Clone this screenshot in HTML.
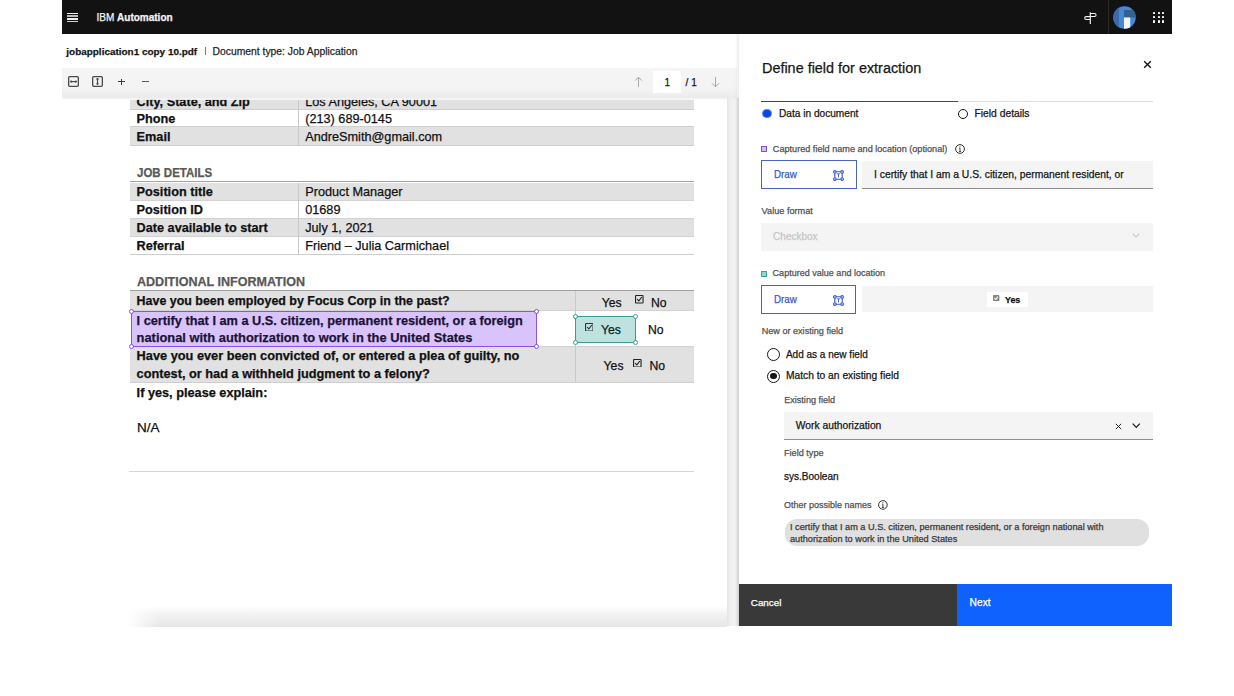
<!DOCTYPE html>
<html><head><meta charset="utf-8"><title>Define field</title>
<style>
html,body{margin:0;padding:0;}
body{width:1234px;height:696px;overflow:hidden;background:#fff;position:relative;font-family:"Liberation Sans",sans-serif;}
.t{position:absolute;white-space:nowrap;line-height:1;-webkit-text-stroke:0.25px currentColor;}
.r{position:absolute;}
</style></head><body>
<div class="r" style="left:62.00px;top:0.00px;width:1110.00px;height:34.00px;background:#121212;"></div>
<div class="r" style="left:66.70px;top:12.60px;width:11.80px;height:1.50px;background:#f0f0f0;"></div>
<div class="r" style="left:66.70px;top:15.20px;width:11.80px;height:1.50px;background:#bdbdbd;"></div>
<div class="r" style="left:66.70px;top:18.00px;width:11.80px;height:1.50px;background:#eeeeee;"></div>
<div class="r" style="left:66.70px;top:20.50px;width:11.80px;height:1.50px;background:#cfcfcf;"></div>
<div class="t" style="left:96.50px;top:13.00px;font-size:10.00px;font-weight:400;color:#f4f4f4;">IBM <b style="font-weight:700">Automation</b></div>
<svg class="r" style="left:1082px;top:10px" width="16" height="16" viewBox="0 0 16 16">
<path d="M8.3 2.3V13.9" stroke="#f4f4f4" stroke-width="1.15" fill="none"/>
<path d="M8.3 3.5H12.6a1.45 1.45 0 0 1 0 2.9H8.3" stroke="#f4f4f4" stroke-width="1.05" fill="none"/>
<path d="M8.3 6.6H4.1a1.4 1.4 0 0 0 0 2.8H8.3" stroke="#f4f4f4" stroke-width="1.05" fill="none"/>
</svg>
<div class="r" style="left:1108.00px;top:0.00px;width:1.00px;height:34.00px;background:#2e2a28;"></div>
<svg class="r" style="left:1112px;top:4.5px" width="25" height="25" viewBox="0 0 25 25">
<defs><clipPath id="av"><circle cx="12.5" cy="12.5" r="11.2"/></clipPath></defs>
<circle cx="12.5" cy="12.5" r="11.8" fill="#0c1830"/>
<circle cx="12.5" cy="12.5" r="11.2" fill="#4a86d6"/>
<g clip-path="url(#av)">
<rect x="0" y="0" width="7" height="25" fill="#3b6aa8"/>
<rect x="12" y="5" width="13" height="7.5" fill="#2f6390"/>
<rect x="12" y="12.5" width="6.2" height="13" fill="#f2f4f6"/>
</g></svg>
<div class="r" style="left:1153.10px;top:11.50px;width:2.20px;height:2.20px;background:#f4f4f4;border-radius:0.6px"></div>
<div class="r" style="left:1153.10px;top:16.00px;width:2.20px;height:2.20px;background:#f4f4f4;border-radius:0.6px"></div>
<div class="r" style="left:1153.10px;top:20.40px;width:2.20px;height:2.20px;background:#f4f4f4;border-radius:0.6px"></div>
<div class="r" style="left:1157.70px;top:11.50px;width:2.20px;height:2.20px;background:#f4f4f4;border-radius:0.6px"></div>
<div class="r" style="left:1157.70px;top:16.00px;width:2.20px;height:2.20px;background:#f4f4f4;border-radius:0.6px"></div>
<div class="r" style="left:1157.70px;top:20.40px;width:2.20px;height:2.20px;background:#f4f4f4;border-radius:0.6px"></div>
<div class="r" style="left:1162.00px;top:11.50px;width:2.20px;height:2.20px;background:#f4f4f4;border-radius:0.6px"></div>
<div class="r" style="left:1162.00px;top:16.00px;width:2.20px;height:2.20px;background:#f4f4f4;border-radius:0.6px"></div>
<div class="r" style="left:1162.00px;top:20.40px;width:2.20px;height:2.20px;background:#f4f4f4;border-radius:0.6px"></div>
<div class="t" style="left:66.30px;top:47.00px;font-size:9.95px;font-weight:700;color:#161616;">jobapplication1 copy 10.pdf</div>
<div class="r" style="left:204.60px;top:47.40px;width:1.10px;height:7.60px;background:#7a7a7a;"></div>
<div class="t" style="left:212.50px;top:47.00px;font-size:10.35px;font-weight:400;color:#262626;">Document type: Job Application</div>
<div class="r" style="left:727.00px;top:98.00px;width:12.00px;height:528.00px;background:linear-gradient(90deg,#e4e4e4,#efefef 25%,#f2f2f2 70%,#e0e0e0);"></div>
<div class="r" style="left:128.00px;top:606.00px;width:599.00px;height:20.50px;background:linear-gradient(90deg,#fff 0,rgba(255,255,255,0) 32px),linear-gradient(#ffffff,#f2f2f2 40%,#e6e6e6);"></div>
<div class="r" style="left:129.70px;top:98.00px;width:564.10px;height:11.60px;background:#e1e1e1;"></div>
<div class="r" style="left:129.70px;top:109.20px;width:564.10px;height:1.00px;background:#cfcfcf;"></div>
<div class="r" style="left:129.70px;top:126.40px;width:564.10px;height:1.00px;background:#d0d0d0;"></div>
<div class="r" style="left:129.70px;top:127.40px;width:564.10px;height:17.60px;background:#e1e1e1;"></div>
<div class="r" style="left:129.70px;top:145.00px;width:564.10px;height:1.00px;background:#cfcfcf;"></div>
<div class="r" style="left:297.80px;top:98.00px;width:1.00px;height:47.50px;background:#c9c9c9;"></div>
<div class="t" style="left:136.60px;top:96.00px;font-size:12.70px;font-weight:700;color:#111;">City, State, and Zip</div>
<div class="t" style="left:305.20px;top:96.00px;font-size:12.70px;font-weight:400;color:#111;">Los Angeles, CA 90001</div>
<div class="t" style="left:136.60px;top:113.00px;font-size:12.70px;font-weight:700;color:#111;">Phone</div>
<div class="t" style="left:305.20px;top:113.00px;font-size:12.70px;font-weight:400;color:#111;">(213) 689-0145</div>
<div class="t" style="left:136.60px;top:131.00px;font-size:12.70px;font-weight:700;color:#111;">Email</div>
<div class="t" style="left:305.20px;top:131.00px;font-size:12.70px;font-weight:400;color:#111;">AndreSmith@gmail.com</div>
<div class="t" style="left:136.60px;top:167.00px;font-size:12.60px;font-weight:700;color:#585858;transform:scaleX(0.913);transform-origin:0 0">JOB DETAILS</div>
<div class="r" style="left:129.70px;top:180.70px;width:564.10px;height:1.60px;background:#a2a2a2;"></div>
<div class="r" style="left:129.70px;top:182.60px;width:564.10px;height:17.80px;background:#e1e1e1;"></div>
<div class="r" style="left:129.70px;top:200.00px;width:564.10px;height:1.00px;background:#d2d2d2;"></div>
<div class="r" style="left:129.70px;top:217.60px;width:564.10px;height:1.00px;background:#d2d2d2;"></div>
<div class="r" style="left:129.70px;top:218.60px;width:564.10px;height:17.80px;background:#e1e1e1;"></div>
<div class="r" style="left:129.70px;top:236.20px;width:564.10px;height:1.00px;background:#d2d2d2;"></div>
<div class="r" style="left:129.70px;top:254.00px;width:564.10px;height:1.00px;background:#cdcdcd;"></div>
<div class="r" style="left:297.80px;top:182.60px;width:1.00px;height:71.90px;background:#c9c9c9;"></div>
<div class="t" style="left:136.60px;top:186.00px;font-size:12.70px;font-weight:700;color:#111;">Position title</div>
<div class="t" style="left:305.20px;top:186.00px;font-size:12.70px;font-weight:400;color:#111;">Product Manager</div>
<div class="t" style="left:136.60px;top:204.00px;font-size:12.70px;font-weight:700;color:#111;">Position ID</div>
<div class="t" style="left:305.20px;top:204.00px;font-size:12.70px;font-weight:400;color:#111;">01689</div>
<div class="t" style="left:136.60px;top:222.00px;font-size:12.70px;font-weight:700;color:#111;">Date available to start</div>
<div class="t" style="left:305.20px;top:222.00px;font-size:12.70px;font-weight:400;color:#111;">July 1, 2021</div>
<div class="t" style="left:136.60px;top:240.00px;font-size:12.70px;font-weight:700;color:#111;">Referral</div>
<div class="t" style="left:305.20px;top:240.00px;font-size:12.70px;font-weight:400;color:#111;">Friend – Julia Carmichael</div>
<div class="t" style="left:136.60px;top:276.00px;font-size:12.80px;font-weight:700;color:#585858;transform:scaleX(0.979);transform-origin:0 0">ADDITIONAL INFORMATION</div>
<div class="r" style="left:129.70px;top:289.50px;width:564.10px;height:1.60px;background:#a2a2a2;"></div>
<div class="r" style="left:129.70px;top:291.30px;width:564.10px;height:19.30px;background:#e1e1e1;"></div>
<div class="r" style="left:129.70px;top:310.40px;width:564.10px;height:1.00px;background:#d2d2d2;"></div>
<div class="r" style="left:129.70px;top:346.30px;width:564.10px;height:35.90px;background:#e1e1e1;"></div>
<div class="r" style="left:129.70px;top:345.80px;width:564.10px;height:1.00px;background:#d2d2d2;"></div>
<div class="r" style="left:129.70px;top:382.00px;width:564.10px;height:1.00px;background:#cfcfcf;"></div>
<div class="r" style="left:575.20px;top:291.30px;width:1.00px;height:91.20px;background:#c9c9c9;"></div>
<div class="t" style="left:136.60px;top:295.00px;font-size:12.45px;font-weight:700;color:#111;">Have you been employed by Focus Corp in the past?</div>
<div class="t" style="left:136.60px;top:350.00px;font-size:12.77px;font-weight:700;color:#111;">Have you ever been convicted of, or entered a plea of guilty, no</div>
<div class="t" style="left:136.60px;top:368.00px;font-size:12.76px;font-weight:700;color:#111;">contest, or had a withheld judgment to a felony?</div>
<div class="t" style="left:136.60px;top:387.00px;font-size:12.72px;font-weight:700;color:#111;">If yes, please explain:</div>
<div class="t" style="left:137.00px;top:421.00px;font-size:13.50px;font-weight:400;color:#111;">N/A</div>
<div class="r" style="left:129.00px;top:470.50px;width:565.00px;height:1.00px;background:#d4d4d4;"></div>
<div class="t" style="left:601.80px;top:297.00px;font-size:12.20px;font-weight:400;color:#111;">Yes</div>
<svg class="r" style="left:635.00px;top:295.00px" width="8.6" height="8.6" viewBox="0 0 10 10">
<rect x="0.65" y="0.65" width="8.7" height="8.7" rx="0.6" fill="none" stroke="#222" stroke-width="1.3"/>
<path d="M2.5 4.9L4.5 6.9L7.9 2.3" fill="none" stroke="#222" stroke-width="1.3"/></svg>
<div class="t" style="left:651.00px;top:297.00px;font-size:12.20px;font-weight:700;color:#111;font-weight:400">No</div>
<div class="t" style="left:603.60px;top:360.00px;font-size:12.20px;font-weight:400;color:#111;">Yes</div>
<svg class="r" style="left:633.00px;top:358.50px" width="8.6" height="8.6" viewBox="0 0 10 10">
<rect x="0.65" y="0.65" width="8.7" height="8.7" rx="0.6" fill="none" stroke="#222" stroke-width="1.3"/>
<path d="M2.5 4.9L4.5 6.9L7.9 2.3" fill="none" stroke="#222" stroke-width="1.3"/></svg>
<div class="t" style="left:649.50px;top:360.00px;font-size:12.20px;font-weight:400;color:#111;">No</div>
<div class="t" style="left:648.00px;top:324.00px;font-size:12.20px;font-weight:400;color:#111;">No</div>
<div class="r" style="left:130.60px;top:310.90px;width:406.40px;height:36.00px;background:#d8c4fb;border:1.4px solid #8a52e6;box-sizing:border-box"></div>
<div class="t" style="left:136.60px;top:315.00px;font-size:12.75px;font-weight:700;color:#1c1238;">I certify that I am a U.S. citizen, permanent resident, or a foreign</div>
<div class="t" style="left:136.60px;top:332.00px;font-size:12.87px;font-weight:700;color:#1c1238;">national with authorization to work in the United States</div>
<div class="r" style="left:128.50px;top:308.80px;width:5.6px;height:5.6px;border-radius:50%;background:#fff;border:1.3px solid #8550e0;box-sizing:border-box"></div>
<div class="r" style="left:533.50px;top:308.80px;width:5.6px;height:5.6px;border-radius:50%;background:#fff;border:1.3px solid #8550e0;box-sizing:border-box"></div>
<div class="r" style="left:128.50px;top:343.50px;width:5.6px;height:5.6px;border-radius:50%;background:#fff;border:1.3px solid #8550e0;box-sizing:border-box"></div>
<div class="r" style="left:533.50px;top:343.50px;width:5.6px;height:5.6px;border-radius:50%;background:#fff;border:1.3px solid #8550e0;box-sizing:border-box"></div>
<div class="r" style="left:574.80px;top:315.90px;width:61.60px;height:27.10px;background:#bde2e0;border:1.5px solid #33a08f;box-sizing:border-box"></div>
<svg class="r" style="left:584.80px;top:322.70px" width="8.6" height="8.6" viewBox="0 0 10 10">
<rect x="0.65" y="0.65" width="8.7" height="8.7" rx="0.6" fill="none" stroke="#2a3a3a" stroke-width="1.3"/>
<path d="M2.5 4.9L4.5 6.9L7.9 2.3" fill="none" stroke="#2a3a3a" stroke-width="1.3"/></svg>
<div class="t" style="left:601.00px;top:324.00px;font-size:12.20px;font-weight:400;color:#0f1f1f;">Yes</div>
<div class="r" style="left:572.70px;top:313.80px;width:5.6px;height:5.6px;border-radius:50%;background:#fff;border:1.3px solid #33a08f;box-sizing:border-box"></div>
<div class="r" style="left:632.90px;top:313.80px;width:5.6px;height:5.6px;border-radius:50%;background:#fff;border:1.3px solid #33a08f;box-sizing:border-box"></div>
<div class="r" style="left:572.70px;top:339.50px;width:5.6px;height:5.6px;border-radius:50%;background:#fff;border:1.3px solid #33a08f;box-sizing:border-box"></div>
<div class="r" style="left:632.90px;top:339.50px;width:5.6px;height:5.6px;border-radius:50%;background:#fff;border:1.3px solid #33a08f;box-sizing:border-box"></div>
<div class="r" style="left:62.00px;top:68.00px;width:675.00px;height:30.00px;background:linear-gradient(#f5f5f5 0,#f3f3f3 70%,#ebebeb 100%);"></div>
<div class="r" style="left:62.00px;top:98.00px;width:665.00px;height:1.60px;background:linear-gradient(#f3f3f3,rgba(250,250,250,0.85));"></div>
<svg class="r" style="left:67.6px;top:76px" width="11" height="11" viewBox="0 0 11 11">
<rect x="0.65" y="0.65" width="9.7" height="9.7" rx="1" fill="none" stroke="#4a4a4a" stroke-width="1.3"/>
<path d="M2.6 5.6H8.4" stroke="#4a4a4a" stroke-width="1.2" fill="none"/><circle cx="3.2" cy="5.6" r="1.15" fill="#4a4a4a"/><circle cx="7.8" cy="5.6" r="1.15" fill="#4a4a4a"/></svg>
<svg class="r" style="left:91.7px;top:76px" width="11" height="11" viewBox="0 0 11 11">
<rect x="0.65" y="0.65" width="9.7" height="9.7" rx="1" fill="none" stroke="#4a4a4a" stroke-width="1.3"/>
<path d="M5.5 2.6V8.4" stroke="#4a4a4a" stroke-width="1.2" fill="none"/><circle cx="5.5" cy="3.2" r="1.1" fill="#4a4a4a"/><circle cx="5.5" cy="7.8" r="1.1" fill="#4a4a4a"/></svg>
<div class="r" style="left:118.40px;top:81.00px;width:6.20px;height:1.30px;background:#3a3a3a;"></div>
<div class="r" style="left:120.85px;top:78.50px;width:1.30px;height:6.30px;background:#3a3a3a;"></div>
<div class="r" style="left:142.30px;top:81.00px;width:6.90px;height:1.20px;background:#5a5a5a;"></div>
<svg class="r" style="left:634px;top:76px" width="9" height="12" viewBox="0 0 9 12">
<path d="M4.5 1.2V11M4.5 1.2L1 4.7M4.5 1.2L8 4.7" stroke="#a8a8a8" stroke-width="1" fill="none"/></svg>
<div class="r" style="left:653.00px;top:70.80px;width:28.00px;height:21.90px;background:#ffffff;"></div>
<div class="t" style="left:664.60px;top:78.00px;font-size:10.00px;font-weight:400;color:#161616;">1</div>
<div class="t" style="left:685.60px;top:78.00px;font-size:10.00px;font-weight:400;color:#161616;">/ 1</div>
<svg class="r" style="left:711.3px;top:76px" width="9" height="12" viewBox="0 0 9 12">
<path d="M4.5 1V10.8M4.5 10.8L1 7.3M4.5 10.8L8 7.3" stroke="#a8a8a8" stroke-width="1" fill="none"/></svg>
<div class="r" style="left:735.00px;top:34.00px;width:4.00px;height:592.00px;background:linear-gradient(90deg,rgba(0,0,0,0),rgba(0,0,0,0.075));"></div>
<div class="r" style="left:739.00px;top:34.00px;width:433.00px;height:592.00px;background:#ffffff;"></div>
<div class="t" style="left:762.00px;top:61.00px;font-size:14.42px;font-weight:400;color:#161616;">Define field for extraction</div>
<svg class="r" style="left:1143px;top:60px" width="9" height="9" viewBox="0 0 9 9">
<path d="M1.2 1.2L7.8 7.8M7.8 1.2L1.2 7.8" stroke="#161616" stroke-width="1.4" fill="none"/></svg>
<div class="r" style="left:761.20px;top:101.00px;width:392.20px;height:1.00px;background:#dcdcdc;"></div>
<div class="r" style="left:761.20px;top:100.60px;width:196.50px;height:1.90px;background:#2c3fb4;"></div>
<div class="r" style="left:762.1px;top:108.6px;width:9.8px;height:9.8px;border-radius:50%;background:#0a44e4;border:1.4px solid #5685f2;box-sizing:border-box"></div>
<div class="t" style="left:779.00px;top:109.00px;font-size:10.14px;font-weight:400;color:#161616;">Data in document</div>
<div class="r" style="left:957.6px;top:108.8px;width:10.2px;height:10.2px;border-radius:50%;border:1.1px solid #161616;box-sizing:border-box"></div>
<div class="t" style="left:974.50px;top:109.00px;font-size:10.30px;font-weight:400;color:#161616;">Field details</div>
<div class="r" style="left:761.40px;top:146.00px;width:6.00px;height:6.00px;background:#d6c0f8;border:1.3px solid #7f52d2;box-sizing:border-box"></div>
<div class="t" style="left:772.80px;top:145.00px;font-size:9.15px;font-weight:400;color:#525252;">Captured field name and location (optional)</div>
<svg class="r" style="left:954.60px;top:144.30px" width="10" height="10" viewBox="0 0 10 10">
<circle cx="5" cy="5" r="4.4" fill="none" stroke="#161616" stroke-width="0.9"/>
<path d="M5 4.2V7.6M4 7.6H6M4.2 4.2H5" stroke="#161616" stroke-width="0.8" fill="none"/><circle cx="5" cy="2.8" r="0.55" fill="#161616"/></svg>
<div class="r" style="left:761.20px;top:160.20px;width:95.40px;height:28.80px;background:#ffffff;border:1.2px solid #4863c4;box-sizing:border-box"></div>
<div class="t" style="left:773.70px;top:170.00px;font-size:10.30px;font-weight:400;color:#3b5ccc;transform:scaleX(0.95);transform-origin:0 0">Draw</div>
<svg class="r" style="left:833.40px;top:169.70px" width="11" height="11" viewBox="0 0 11 11">
<path d="M3.2 1.8H7.8M3.2 9.2H7.8M1.8 3.2V7.8M9.2 3.2V7.8" stroke="#3553c8" stroke-width="1.1" fill="none"/>
<circle cx="1.9" cy="1.9" r="1.3" fill="#fff" stroke="#3553c8" stroke-width="1.1"/><circle cx="9.1" cy="1.9" r="1.3" fill="#fff" stroke="#3553c8" stroke-width="1.1"/>
<circle cx="1.9" cy="9.1" r="1.3" fill="#fff" stroke="#3553c8" stroke-width="1.1"/><circle cx="9.1" cy="9.1" r="1.3" fill="#fff" stroke="#3553c8" stroke-width="1.1"/>
<path d="M4.1 3.9H6.9M5.5 3.9V7.4" stroke="#3553c8" stroke-width="0.9" fill="none"/></svg>
<div class="r" style="left:862.00px;top:160.60px;width:291.00px;height:28.40px;background:#f4f4f4;border-bottom:1px solid #8d8d8d;box-sizing:border-box"></div>
<div class="t" style="left:874.00px;top:170.00px;font-size:10.34px;font-weight:400;color:#161616;">I certify that I am a U.S. citizen, permanent resident, or</div>
<div class="t" style="left:761.60px;top:207.00px;font-size:9.19px;font-weight:400;color:#525252;">Value format</div>
<div class="r" style="left:761.00px;top:222.80px;width:392.00px;height:28.20px;background:#f4f4f4;"></div>
<div class="t" style="left:773.10px;top:232.00px;font-size:10.00px;font-weight:400;color:#c6c6c6;">Checkbox</div>
<svg class="r" style="left:1132px;top:233px" width="8" height="5" viewBox="0 0 8 5">
<path d="M0.8 0.8L4 4L7.2 0.8" stroke="#c6c6c6" stroke-width="1.1" fill="none"/></svg>
<div class="r" style="left:761.40px;top:270.90px;width:6.00px;height:6.00px;background:#92d8cd;border:1.3px solid #38a496;box-sizing:border-box"></div>
<div class="t" style="left:772.60px;top:269.00px;font-size:9.04px;font-weight:400;color:#525252;">Captured value and location</div>
<div class="r" style="left:761.20px;top:285.20px;width:95.20px;height:28.80px;background:#ffffff;border:1.2px solid #4863c4;box-sizing:border-box"></div>
<div class="t" style="left:773.70px;top:295.00px;font-size:10.30px;font-weight:400;color:#3b5ccc;transform:scaleX(0.95);transform-origin:0 0">Draw</div>
<svg class="r" style="left:833.40px;top:294.70px" width="11" height="11" viewBox="0 0 11 11">
<path d="M3.2 1.8H7.8M3.2 9.2H7.8M1.8 3.2V7.8M9.2 3.2V7.8" stroke="#3553c8" stroke-width="1.1" fill="none"/>
<circle cx="1.9" cy="1.9" r="1.3" fill="#fff" stroke="#3553c8" stroke-width="1.1"/><circle cx="9.1" cy="1.9" r="1.3" fill="#fff" stroke="#3553c8" stroke-width="1.1"/>
<circle cx="1.9" cy="9.1" r="1.3" fill="#fff" stroke="#3553c8" stroke-width="1.1"/><circle cx="9.1" cy="9.1" r="1.3" fill="#fff" stroke="#3553c8" stroke-width="1.1"/>
<path d="M4.1 3.9H6.9M5.5 3.9V7.4" stroke="#3553c8" stroke-width="0.9" fill="none"/></svg>
<div class="r" style="left:862.00px;top:285.80px;width:291.00px;height:26.70px;background:#f4f4f4;"></div>
<div class="r" style="left:987.20px;top:292.30px;width:40.60px;height:15.00px;background:#ffffff;"></div>
<svg class="r" style="left:993.3px;top:294.5px" width="6.3" height="6.3" viewBox="0 0 10 10">
<rect x="0.5" y="0.5" width="9" height="9" rx="1" fill="#8a8a8a" stroke="#666" stroke-width="1"/>
<path d="M2.4 5L4.4 7L7.8 2.6" fill="none" stroke="#fff" stroke-width="1.6"/></svg>
<div class="t" style="left:1005.00px;top:296.00px;font-size:8.90px;font-weight:700;color:#111;">Yes</div>
<div class="t" style="left:761.70px;top:327.00px;font-size:9.11px;font-weight:400;color:#525252;">New or existing field</div>
<div class="r" style="left:766.9px;top:347.9px;width:13px;height:13px;border-radius:50%;border:1.1px solid #161616;box-sizing:border-box"></div>
<div class="t" style="left:785.90px;top:350.00px;font-size:10.03px;font-weight:400;color:#161616;">Add as a new field</div>
<div class="r" style="left:766.9px;top:369.5px;width:13px;height:13px;border-radius:50%;border:1.1px solid #161616;box-sizing:border-box"></div>
<div class="r" style="left:770.1px;top:372.7px;width:6.6px;height:6.6px;border-radius:50%;background:#161616"></div>
<div class="t" style="left:785.90px;top:371.00px;font-size:10.27px;font-weight:400;color:#161616;">Match to an existing field</div>
<div class="t" style="left:784.20px;top:396.00px;font-size:9.08px;font-weight:400;color:#525252;">Existing field</div>
<div class="r" style="left:783.80px;top:412.10px;width:369.20px;height:28.20px;background:#f4f4f4;border-bottom:1px solid #8d8d8d;box-sizing:border-box"></div>
<div class="t" style="left:795.80px;top:421.00px;font-size:10.29px;font-weight:400;color:#161616;">Work authorization</div>
<svg class="r" style="left:1115.4px;top:422.6px" width="7" height="7" viewBox="0 0 7 7">
<path d="M0.8 0.8L6.2 6.2M6.2 0.8L0.8 6.2" stroke="#262626" stroke-width="1" fill="none"/></svg>
<svg class="r" style="left:1132px;top:423.2px" width="8.5" height="5.5" viewBox="0 0 8.5 5.5">
<path d="M0.7 0.7L4.25 4.4L7.8 0.7" stroke="#161616" stroke-width="1.2" fill="none"/></svg>
<div class="t" style="left:784.00px;top:449.00px;font-size:9.13px;font-weight:400;color:#525252;">Field type</div>
<div class="t" style="left:784.00px;top:472.00px;font-size:10.02px;font-weight:400;color:#161616;">sys.Boolean</div>
<div class="t" style="left:784.00px;top:501.00px;font-size:9.01px;font-weight:400;color:#525252;">Other possible names</div>
<svg class="r" style="left:878.40px;top:500.00px" width="9.8" height="9.8" viewBox="0 0 10 10">
<circle cx="5" cy="5" r="4.4" fill="none" stroke="#161616" stroke-width="0.9"/>
<path d="M5 4.2V7.6M4 7.6H6M4.2 4.2H5" stroke="#161616" stroke-width="0.8" fill="none"/><circle cx="5" cy="2.8" r="0.55" fill="#161616"/></svg>
<div class="r" style="left:784.7px;top:518.8px;width:364.8px;height:27.6px;border-radius:12px;background:#e0e0e0"></div>
<div class="t" style="left:790.00px;top:523.00px;font-size:9.19px;font-weight:400;color:#393939;">I certify that I am a U.S. citizen, permanent resident, or a foreign national with</div>
<div class="t" style="left:790.00px;top:535.00px;font-size:9.19px;font-weight:400;color:#393939;">authorization to work in the United States</div>
<div class="r" style="left:738.50px;top:584.00px;width:218.50px;height:42.00px;background:#393939;"></div>
<div class="t" style="left:750.80px;top:598.00px;font-size:9.83px;font-weight:400;color:#ffffff;">Cancel</div>
<div class="r" style="left:957.00px;top:584.00px;width:215.00px;height:42.00px;background:#0f62fe;"></div>
<div class="t" style="left:969.60px;top:598.00px;font-size:10.21px;font-weight:400;color:#ffffff;">Next</div>
</body></html>
